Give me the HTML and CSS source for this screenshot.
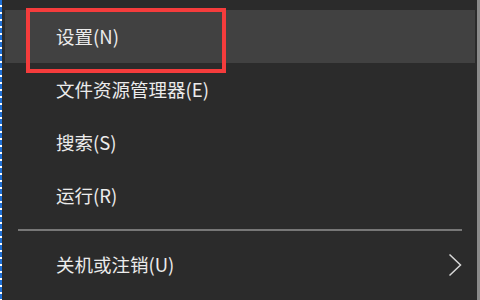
FILE: index.html
```html
<!DOCTYPE html>
<html lang="zh-CN">
<head>
  <meta charset="UTF-8" />
  <title>开始菜单</title>
  <link rel="stylesheet" href="styles.css">
</head>
<body>
  <div class="screen">
    <div class="edge"></div>

    <div class="menu">
      <div class="item active">设置(N)</div>
      <div class="item">文件资源管理器(E)</div>
      <div class="item">搜索(S)</div>
      <div class="item">运行(R)</div>
      <div class="divider"></div>
      <div class="item">
        <span>关机或注销(U)</span>
        <svg class="chevron" width="14" height="24" viewBox="0 0 14 24">
          <path d="M1.5 1.5 L12.5 12 L1.5 22.5" fill="none" stroke="#d8d8d8" stroke-width="1.5" />
        </svg>
      </div>
    </div>

    <div class="scrollbar"></div>

    <!-- annotation box around the first item -->
    <div class="mark"></div>
  </div>
</body>
</html>
```

FILE: styles.css
```css
body {
  margin: 0;
  background: #2b2b2b;
  font-family: "Noto Sans CJK SC", "Noto Sans", sans-serif;
  color: #ececec;
}

.screen {
  position: relative;
  display: flex;
  width: 480px;
  height: 300px;
  overflow: hidden;
}

.edge {
  width: 2px;
  flex: none;
  background: repeating-linear-gradient(to bottom, #1e6fd6 0, #1e6fd6 5px, #ffffff 5px, #ffffff 7px);
}

.menu {
  flex: 1;
  padding: 10px 0 0 3px;
}

.item {
  display: flex;
  align-items: center;
  justify-content: space-between;
  height: 53px;
  padding: 0 13px 0 51px;
  font-size: 18.5px;
  line-height: 1;
}

.item.active {
  background: #414141;
}

.divider {
  height: 2px;
  margin: 7px 13px 7px 13px;
  background: #777777;
}

.chevron {
  display: block;
  margin-top: 1px;
}

.scrollbar {
  width: 3px;
  flex: none;
  margin-left: 2px;
  background: #8a8a8a;
}

.mark {
  position: absolute;
  left: 26px;
  top: 8px;
  width: 192px;
  height: 57px;
  border: 4px solid #f53c3c;
}
```
